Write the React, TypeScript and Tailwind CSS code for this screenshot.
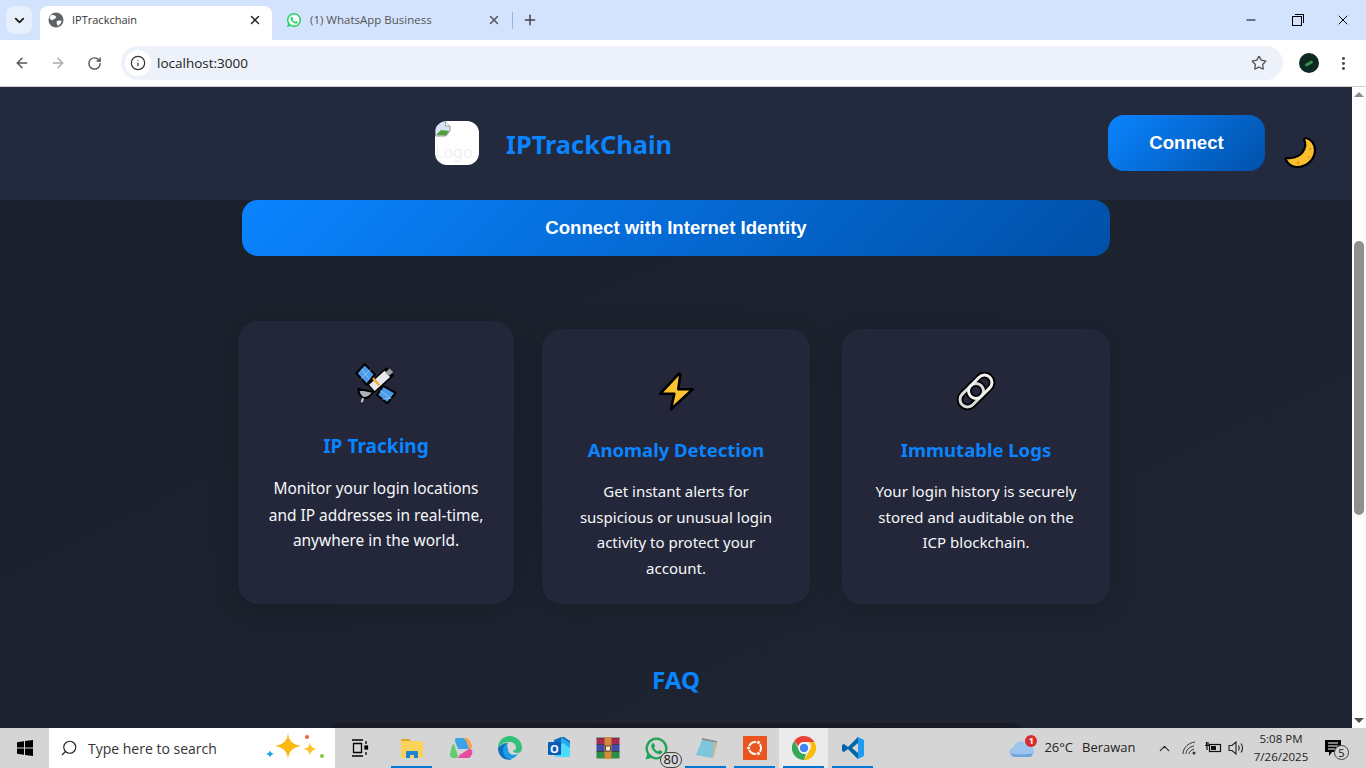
import { ArrowLeft, ArrowRight, RotateCw, Star, EllipsisVertical, X, Plus, ChevronDown, ChevronUp, Search, Info, Minus } from 'lucide-react';

const cards = [
  { title: 'IP Tracking', text: 'Monitor your login locations and IP addresses in real-time, anywhere in the world.', icon: 'satellite' },
  { title: 'Anomaly Detection', text: 'Get instant alerts for suspicious or unusual login activity to protect your account.', icon: 'bolt' },
  { title: 'Immutable Logs', text: 'Your login history is securely stored and auditable on the ICP blockchain.', icon: 'link' },
];

function SatelliteIcon() {
  return (
    <svg width="42" height="42" viewBox="15 14 42 42" strokeLinejoin="round">
      <path d="M25 15L35 25 27 35 17 24z" fill="#4a9be8" stroke="#000" strokeWidth="2" />
      <path d="M43 36L55 43 47 53 37 45z" fill="#4a9be8" stroke="#000" strokeWidth="2" />
      <path d="M21 29.500L31 20M30 30L22 20M50 48L40 40.500M51 48 42 49" stroke="#a9d4f7" strokeWidth="0.700" />
      <path d="M31 39L50 22" stroke="#000" strokeWidth="11" />
      <path d="M32 38L47 24.500" stroke="#e6e8eb" strokeWidth="8" />
      <path d="M47 24.500L51 21" stroke="#9a9ea5" strokeWidth="5" />
      <path d="M33 28.500L39 35.500" stroke="#f5a623" strokeWidth="2" />
      <path d="M19 39L33 42Q30 48 24 48 19 46 19 39z" fill="#aeb2b8" stroke="#000" strokeWidth="2" />
      <path d="M23.500 48L22 52" stroke="#c6c9ce" strokeWidth="2" />
    </svg>
  );
}

function BoltIcon() {
  return (
    <svg width="40" height="40" viewBox="0 0 40 40">
      <path d="M23 2.700L4.300 22.700H18.300L15 38.300 36.700 18.300H22.300L24.300 3.300z" fill="#fcc32f" stroke="#000" strokeWidth="2.600" strokeLinejoin="round" />
    </svg>
  );
}

function LinkIcon() {
  return (
    <svg width="40" height="40" viewBox="0 0 40 40" fill="none">
      <g transform="rotate(-45 20 20)">
        <rect x="0.500" y="12.500" width="27" height="15" rx="7.500" stroke="#000" strokeWidth="6.500" />
        <rect x="12.500" y="12.500" width="27" height="15" rx="7.500" stroke="#000" strokeWidth="6.500" />
        <rect x="0.500" y="12.500" width="27" height="15" rx="7.500" stroke="#d9dadc" strokeWidth="3" />
        <rect x="12.500" y="12.500" width="27" height="15" rx="7.500" stroke="#f2f2f3" strokeWidth="3" />
      </g>
    </svg>
  );
}

function MoonIcon() {
  return (
    <svg width="32" height="32" viewBox="0 0 32 32">
      <path d="M22 2C27 3 31 8 31 14 31 24 22 31 13 31 8 31 4 28 2 24 1 23 2 22 3 22 11 23 19 19 21 11 21.500 8 21 5 20 4 20 3 21 2 22 2z" fill="#fbbf2d" stroke="#000" strokeWidth="2.200" strokeLinejoin="round" />
      <circle cx="26" cy="13" r="1.200" fill="#e09a1a" />
      <circle cx="14" cy="27" r="1.400" fill="#e09a1a" />
      <circle cx="25" cy="21" r="1" fill="#e09a1a" />
    </svg>
  );
}

function BrokenImage() {
  return (
    <svg width="16" height="16" viewBox="0 0 16 16" className="absolute top-0 left-0">
      <path d="M0.500 0.500h10l4.500 4.500v5l-4 5h-10.500z" fill="#d6e2f7" stroke="#9a9a9a" />
      <path d="M10.500 0.500v4.500h4.500" fill="#fff" stroke="#9a9a9a" />
      <path d="M1 14l5-5 8 1-3 4.500z" fill="#4f9e3a" />
    </svg>
  );
}

function TabGlobe() {
  return (
    <svg width="16" height="16" viewBox="0 0 16 16">
      <circle cx="8" cy="8" r="7.500" fill="#5f6368" />
      <path d="M3 3c2 0 4 0 5 1.500S6 7 5 8 2 7 1.500 6zM9 9c2-1 4-.5 4.500 0S12 13 10 14c-1-1-.5-2-1.500-3z" fill="#fff" />
    </svg>
  );
}

function WhatsAppGlyph({ size, color, dot }: { size: number; color: string; dot: string }) {
  return (
    <svg width={size} height={size} viewBox="0 0 24 24">
      <path d="M12 1.500A10.500 10.500 0 0 0 3 17.400L1.500 22.500l5.300-1.400A10.500 10.500 0 1 0 12 1.500z" fill={color} />
      <circle cx="12" cy="12" r="8.300" fill={dot} />
      <path d="M8.800 6.800c-.6 0-1.900 1-1.900 2.800 0 3 4.300 7.800 8 7.800 1.600 0 2.800-1.300 2.800-2.300 0-.5-2.300-1.700-2.700-1.700-.5 0-1 1.300-1.500 1.300-1 0-3.700-2.300-3.700-3.500 0-.5.900-1 .9-1.500S9.500 6.800 8.800 6.800z" fill={color} />
    </svg>
  );
}

function TaskIcon({ active, underline, children }: { active?: boolean; underline?: boolean; children: React.ReactNode }) {
  return (
    <div className={`relative w-[49px] h-full flex items-center justify-center ${active ? 'bg-[#ebebeb]' : ''}`}>
      {children}
      {underline && <div className="absolute bottom-0 left-[4px] right-[4px] h-[2px] bg-[#0078d4]" />}
    </div>
  );
}

export default function App() {
  return (
    <div className="h-screen flex flex-col overflow-hidden bg-white font-['Noto_Sans',sans-serif]">
      {/* Tab strip */}
      <div className="h-10 shrink-0 flex bg-[#d3e3fd] pt-[6px] pl-[6px] font-['Open_Sans',sans-serif]">
        <div className="w-[26px] h-[28px] rounded-lg bg-[#e8effc] flex items-center justify-center">
          <ChevronDown size={15} strokeWidth={3} className="text-[#1f1f1f]" />
        </div>
        <div className="ml-[8px] w-[232px] rounded-t-lg bg-white flex items-center pl-[8px] pr-[10px] pb-[6px]">
          <TabGlobe />
          <span className="ml-[8px] text-[11px] text-[#333]">IPTrackchain</span>
          <X size={14} strokeWidth={2.500} className="ml-auto text-[#222]" />
        </div>
        <div className="w-[266px] flex items-center pl-[14px] pb-[6px]">
          <WhatsAppGlyph size={16} color="#25d366" dot="#fff" />
          <span className="ml-[8px] text-[11.500px] text-[#555]">(1) WhatsApp Business</span>
          <X size={14} strokeWidth={2.500} className="ml-auto text-[#555]" />
          <div className="ml-[11px] w-px h-[17px] bg-[#8fb4ee]" />
          <Plus size={16} strokeWidth={2.200} className="ml-[9px] text-[#444]" />
        </div>
        <div className="ml-auto flex items-start text-black">
          <div className="w-[46px] h-[28px] flex items-center justify-center"><Minus size={14} strokeWidth={1.800} /></div>
          <div className="w-[46px] h-[28px] flex items-center justify-center">
            <div className="relative w-[10px] h-[10px] border border-black mt-[1px]">
              <div className="absolute -top-[3px] -right-[3px] w-[9px] h-[9px] border-t border-r border-black" />
            </div>
          </div>
          <div className="w-[46px] h-[28px] flex items-center justify-center"><X size={16} strokeWidth={1.500} /></div>
        </div>
      </div>

      {/* Toolbar */}
      <div className="h-[47px] shrink-0 flex items-center rounded-t-lg bg-white border-b border-[#d0d0d0] pl-[14px] pr-[14px]">
        <ArrowLeft size={16} strokeWidth={2.200} className="text-[#555]" />
        <ArrowRight size={16} strokeWidth={2.200} className="ml-[20px] text-[#aaa]" />
        <RotateCw size={15} strokeWidth={2.200} className="ml-[21px] text-[#555]" />
        <div className="ml-[19px] h-[34px] flex-1 rounded-full bg-[#edf2fa] flex items-center pl-[4px] pr-[16px]">
          <div className="w-[26px] h-[26px] rounded-full bg-white flex items-center justify-center">
            <Info size={16} strokeWidth={1.800} className="text-[#333]" />
          </div>
          <span className="ml-[6px] text-[13.500px] text-[#222] font-['Open_Sans',sans-serif]">localhost:3000</span>
          <Star size={16} strokeWidth={2} className="ml-auto text-[#555]" />
        </div>
        <div className="ml-[16px] w-5 h-5 rounded-full bg-[#0d2a22] flex items-center justify-center">
          <div className="w-2 h-[3px] bg-[#3b8f4c] rotate-[-30deg]" />
        </div>
        <EllipsisVertical size={17} strokeWidth={2.200} className="ml-[16px] text-[#444]" />
      </div>

      {/* Page */}
      <div className="flex-1 min-h-0 flex">
        <div className="flex-1 min-w-0 flex flex-col bg-gradient-to-br from-[#1b1f2b] to-[#1e2532] overflow-hidden">
          <header className="h-[113px] shrink-0 flex items-center bg-[#232a3d] pl-[435px] pr-[36px]">
            <div className="relative w-11 h-11 -mt-[1px] rounded-xl bg-white overflow-hidden">
              <BrokenImage />
              <span className="absolute left-0 top-[19px] text-[16px] leading-6 text-[#f0f0f4]">Logo</span>
            </div>
            <h1 className="ml-[27px] mt-[2px] text-[25.400px] font-bold text-[#0a84ff]">IPTrackChain</h1>
            <button className="ml-auto w-[157px] h-14 -mt-[2px] rounded-2xl bg-[linear-gradient(135deg,#0a84ff,#0050a8)] text-white font-bold text-[18.600px] font-['Liberation_Sans',sans-serif]">
              Connect
            </button>
            <div className="ml-[19px] mt-[16px] w-[32px] flex justify-center"><MoonIcon /></div>
          </header>

          <main className="flex-1 min-h-0 w-[868px] mx-auto">
            <button className="w-full h-14 rounded-2xl bg-[linear-gradient(135deg,#0a84ff,#0050a8)] text-white font-bold text-[18.600px] font-['Liberation_Sans',sans-serif]">
              Connect with Internet Identity
            </button>

            <div className="mt-[73px] grid grid-cols-3 gap-8">
              {cards.map((card, i) => (
                <div
                  key={card.title}
                  className={`h-[275px] rounded-[20px] bg-[#232739] shadow-[0_4px_24px_rgba(0,0,0,0.18)] px-8 pt-[33px] text-center ${i === 0 ? '-translate-y-1 scale-[1.03]' : ''}`}
                >
                  <div className="h-[58px] flex items-center justify-center">
                    {card.icon === 'satellite' && <SatelliteIcon />}
                    {card.icon === 'bolt' && <BoltIcon />}
                    {card.icon === 'link' && <LinkIcon />}
                  </div>
                  <h3 className="mt-[14px] text-[18.500px] leading-8 font-bold text-[#0a84ff] whitespace-nowrap">{card.title}</h3>
                  <p className="mt-[13px] -mx-1 text-[15px] leading-[25.600px] text-[#f6f7f9]">{card.text}</p>
                </div>
              ))}
            </div>

            <h2 className="mt-[58px] text-center text-[24px] leading-9 font-bold text-[#0a84ff]">FAQ</h2>
            <div className="mt-[25px] mx-[86px] h-20 rounded-xl bg-[#181b26]" />
          </main>
        </div>

        {/* Scrollbar */}
        <div className="w-[14px] shrink-0 bg-[#fdfdfd] flex flex-col items-center pt-[5px]">
          <div className="w-0 h-0 border-x-[5px] border-x-transparent border-b-[5px] border-b-[#8a8a8a]" />
          <div className="mt-[144px] w-[10px] h-[274px] rounded-full bg-[#8f8f8f]" />
          <div className="mt-auto mb-[5px] w-0 h-0 border-x-[5px] border-x-transparent border-t-[5px] border-t-[#505050]" />
        </div>
      </div>

      {/* Taskbar */}
      <div className="h-10 shrink-0 flex items-center bg-[#d5d5d5] font-['Open_Sans',sans-serif] text-[#222]">
        <div className="w-[49px] flex justify-center">
          <svg width="16" height="16" viewBox="0 0 16 16" fill="#000">
            <path d="M0 2.300l7-1V7.600H0zM8 1.100l8-1.100v7.600H8zM0 8.400h7v6.300l-7-1zM8 8.400h8V16l-8-1.100z" />
          </svg>
        </div>
        <div className="w-[286px] h-full flex items-center bg-white pl-[11px] pr-[8px]">
          <Search size={18} strokeWidth={1.500} className="-scale-x-100 text-[#222]" />
          <span className="ml-[10px] text-[14px] text-[#333]">Type here to search</span>
          <svg width="64" height="32" viewBox="0 0 64 32" className="ml-auto">
            <path d="M25 1c1 8 4 11 13 13-9 2-12 5-13 13-1-8-4-11-13-13 9-2 12-5 13-13z" fill="#fdb913" />
            <path d="M47 10c.7 4 2 6 6.500 7-4.500 1-5.800 3-6.500 7-.7-4-2-6-6.500-7 4.500-1 5.800-3 6.500-7z" fill="#fdc42f" />
            <path d="M7 18c.3 2 1.200 3 4 4-2.800.5-3.700 2-4 4-.3-2-1.200-3.500-4-4 2.800-1 3.700-2 4-4z" fill="#1aa3e8" />
            <circle cx="44" cy="5" r="2" fill="#e8643c" />
            <circle cx="59" cy="24" r="2" fill="#8cc63f" />
          </svg>
        </div>

        <TaskIcon>
          <svg width="18" height="18" viewBox="0 0 18 18" fill="none" stroke="#000" strokeWidth="1.300">
            <path d="M1 1h11M1 17h11M2.500 4.500h8v9h-8z" />
            <path d="M15 2v3M15 13v3" />
            <rect x="14" y="7" width="2.500" height="3" fill="#000" />
          </svg>
        </TaskIcon>
        <div className="w-[3px]" />
        <TaskIcon underline>
          <svg width="24" height="22" viewBox="0 0 24 22">
            <path d="M1 3a1 1 0 0 1 1-1h7l2 2h-10z" fill="#e0a526" />
            <rect x="1" y="4" width="22" height="17" rx="1" fill="#fbd25a" />
            <path d="M6 21v-6a1 1 0 0 1 1-1h10a1 1 0 0 1 1 1v6h-4v-3h-4v3z" fill="#1b86d6" />
          </svg>
        </TaskIcon>
        <TaskIcon>
          <svg width="24" height="24" viewBox="0 0 24 24">
            <path d="M8 2h6c2 0 3 1 3.500 3L20 13H9L6 5c-.5-2 .5-3 2-3z" fill="#3aa3e8" />
            <path d="M5 8l4 12c-1 2-2 2-4 2-3 0-4.500-2-4-4l2-8c.3-1 1-2 2-2z" fill="#5fce6c" />
            <path d="M20 13c3 0 4 2 3 5l-1 2c-.5 1.500-2 2-3 2H7c2 0 3-1 3.500-3z" fill="#e84aa0" />
            <path d="M14 2h2c3 0 5 2 6 5l1 4c0 1-1 2-3 2-1-4-2-9-6-11z" fill="#f5a04a" />
          </svg>
        </TaskIcon>
        <TaskIcon>
          <svg width="24" height="24" viewBox="0 0 24 24">
            <path d="M12 0a12 12 0 0 1 12 12c0 3-2 5-5 5-2 0-4-1-4-2.500 2 0 3-1 3-3C18 8 15 6 11 6 6 6 2 9 0 12 0 5 5 0 12 0z" fill="#34c27a" />
            <path d="M0 12c2-3 6-5 10-5-2 1-4 3-4 7 0 4 3 8 8 9.500C6 25 0 20 0 12z" fill="#0c6fc0" />
            <path d="M10 13c0 5 5 7 10 5-2 3-6 5-8 5-4 0-7-4-7-9 0-3 2-6 5-7-1 1-1 3 0 6z" fill="#1b9de2" />
          </svg>
        </TaskIcon>
        <TaskIcon>
          <svg width="24" height="24" viewBox="0 0 24 24">
            <path d="M7 4l7-3h3l6 4v12l-4 3H8z" fill="#0f6cbd" />
            <path d="M14 1l9 6v10h-9z" fill="#28a8ea" />
            <path d="M7 13l9-6 7 5v8a1 1 0 0 1-1 1H8z" fill="#50d9ff" />
            <rect x="1" y="6" width="13" height="13" rx="1" fill="#0a5bb5" />
            <text x="7.500" y="16.500" fontSize="11" fontWeight="700" textAnchor="middle" fill="#fff">O</text>
          </svg>
        </TaskIcon>
        <TaskIcon>
          <svg width="24" height="24" viewBox="0 0 24 24">
            <rect x="0.500" y="2" width="23" height="6.500" fill="#a52b50" />
            <rect x="0.500" y="8.500" width="23" height="7" fill="#3f4ea3" />
            <rect x="0.500" y="15.500" width="23" height="7" fill="#2f8a45" />
            <path d="M0.500 2h23M0.500 8.500h23M0.500 15.500h23" stroke="#2a2a2a" strokeWidth="0.700" />
            <rect x="8.500" y="1" width="7" height="22" fill="#d58a3a" />
            <rect x="9.500" y="10" width="5" height="5" fill="#f3e4c4" stroke="#222" strokeWidth="0.700" />
          </svg>
        </TaskIcon>
        <TaskIcon>
          <div className="relative">
            <WhatsAppGlyph size={25} color="#24a35a" dot="#d5d5d5" />
            <span className="absolute -right-[13px] -bottom-[7px] w-[22px] h-[16px] flex items-center justify-center rounded-full border border-[#444] bg-[#d6d6d6] text-[13px] leading-none text-[#111]">80</span>
          </div>
        </TaskIcon>
        <TaskIcon underline>
          <svg width="24" height="24" viewBox="0 0 24 24">
            <path d="M8 2l15 3-3 17-17-3z" fill="#bcd9e6" />
            <path d="M2 19l6-15 15 3-5 15z" fill="#7ec6dc" />
            <path d="M8 2l15 3v2L8 4z" fill="#8d8d8d" />
            <path d="M20 6l3 1-4 15h-1z" fill="#c9b58a" />
          </svg>
        </TaskIcon>
        <TaskIcon underline>
          <svg width="24" height="24" viewBox="0 0 24 24">
            <rect width="24" height="24" fill="#e95420" />
            <circle cx="12" cy="12" r="6" fill="none" stroke="#fff" strokeWidth="2" />
            <circle cx="5.500" cy="12" r="2" fill="#fff" stroke="#e95420" />
            <circle cx="15.500" cy="6.500" r="2" fill="#fff" stroke="#e95420" />
            <circle cx="15.500" cy="17.500" r="2" fill="#fff" stroke="#e95420" />
          </svg>
        </TaskIcon>
        <TaskIcon active underline>
          <svg width="24" height="24" viewBox="0 0 24 24">
            <path d="M12 0a12 12 0 0 1 10.400 6H12a6 6 0 0 0-5.800 4.400L2.200 5A12 12 0 0 1 12 0z" fill="#ea4335" />
            <path d="M22.400 6A12 12 0 0 1 12 24l5.200-9a6 6 0 0 0 0-9z" fill="#fbbc04" />
            <path d="M12 24A12 12 0 0 1 2.200 5l4.900 9a6 6 0 0 0 6.900 3.700z" fill="#34a853" />
            <circle cx="12" cy="12" r="5.500" fill="#fff" />
            <circle cx="12" cy="12" r="4.300" fill="#4285f4" />
          </svg>
        </TaskIcon>
        <TaskIcon underline>
          <svg width="24" height="24" viewBox="0 0 24 24">
            <path d="M17 1l6 3v16l-6 3-10-10z" fill="#1f9cf0" />
            <path d="M17 1v22L7 13l-4 3-2-1V9l2-1 4 3z" fill="#0065a9" />
            <path d="M17 7l-6 5 6 5z" fill="#d5d5d5" />
          </svg>
        </TaskIcon>

        {/* Tray */}
        <div className="ml-auto h-full flex items-center text-[13px] text-[#222]">
          <div className="relative">
            <svg width="26" height="20" viewBox="0 0 26 20">
              <path d="M6 19a5 5 0 0 1-1-10 7 7 0 0 1 13-2 6 6 0 0 1 2 12z" fill="#9cc4ee" />
              <path d="M2 15c5 2 15 2 22 0-1 3-2 4-4 4H6c-2 0-3-1-4-4z" fill="#6fa3dc" />
            </svg>
            <span className="absolute -top-[3px] right-[-2px] w-3 h-3 rounded-full bg-[#d92b2b] text-white text-[9px] leading-3 text-center font-bold">1</span>
          </div>
          <span className="ml-[9px]">26°C</span>
          <span className="ml-[9px] w-[52px]">Berawan</span>
          <ChevronUp size={17} strokeWidth={1.500} className="ml-[22px]" />
          <svg width="16" height="16" viewBox="0 0 16 16" fill="none" stroke="#333" strokeWidth="1" className="ml-[9px]">
            <path d="M1 14C1 8 6 3 13 2M4 14c0-4 3-7 8-8M7 14c0-2 2-4 5-5" />
            <circle cx="12" cy="13" r="1.500" fill="#333" stroke="none" />
          </svg>
          <svg width="18" height="14" viewBox="0 0 18 14" fill="none" stroke="#111" strokeWidth="1.200" className="ml-[6px]">
            <rect x="5.500" y="3.500" width="11" height="7" />
            <rect x="7" y="5" width="5" height="4" fill="#111" stroke="none" />
            <path d="M1 4.500h4M2.500 1v3.500M4 1v3.500M3 4.500V9" />
          </svg>
          <svg width="18" height="16" viewBox="0 0 18 16" fill="none" stroke="#222" strokeWidth="1.100" className="ml-[6px]">
            <path d="M1 5.500h3L8 2v12l-4-3.500H1z" />
            <path d="M10.500 5.500c1 1.500 1 3.500 0 5M13 3.500c2 2.500 2 6.500 0 9" />
          </svg>
          <div className="ml-[5px] w-[60px] text-center text-[11.500px] leading-[18px]">
            <div>5:08 PM</div>
            <div>7/26/2025</div>
          </div>
          <div className="relative ml-[13px] mr-[24px]">
            <svg width="18" height="18" viewBox="0 0 18 18" fill="#000">
              <path d="M1 1h16v12H8l-3 4v-4H1z" />
              <path d="M4 4h10M4 7h10M4 10h7" stroke="#fff" strokeWidth="1" />
            </svg>
            <span className="absolute -right-[7px] -bottom-[3px] w-[15px] h-[15px] flex items-center justify-center rounded-full border border-[#444] bg-[#d6d6d6] text-[11px] leading-none text-[#111]">5</span>
          </div>
        </div>
      </div>
    </div>
  );
}
